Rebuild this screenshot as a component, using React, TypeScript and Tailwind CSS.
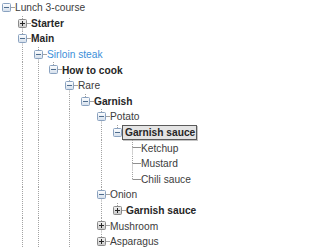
type Node = {
  label: string;
  children?: Node[];
  open?: boolean;
  bold?: boolean;
  link?: boolean;
  selected?: boolean;
};

const tree: Node = {
  label: "Lunch 3-course",
  open: true,
  children: [
    { label: "Starter", bold: true, children: [{ label: "Soup" }] },
    {
      label: "Main",
      bold: true,
      open: true,
      children: [
        {
          label: "Sirloin steak",
          link: true,
          open: true,
          children: [
            {
              label: "How to cook",
              bold: true,
              open: true,
              children: [
                {
                  label: "Rare",
                  open: true,
                  children: [
                    {
                      label: "Garnish",
                      bold: true,
                      open: true,
                      children: [
                        {
                          label: "Potato",
                          open: true,
                          children: [
                            {
                              label: "Garnish sauce",
                              bold: true,
                              selected: true,
                              open: true,
                              children: [
                                { label: "Ketchup" },
                                { label: "Mustard" },
                                { label: "Chili sauce" },
                              ],
                            },
                          ],
                        },
                        {
                          label: "Onion",
                          open: true,
                          children: [
                            { label: "Garnish sauce", bold: true, children: [{ label: "Ketchup" }] },
                          ],
                        },
                        { label: "Mushroom", children: [{ label: "Sauce" }] },
                        { label: "Asparagus", children: [{ label: "Sauce" }] },
                      ],
                    },
                  ],
                },
                { label: "Medium", children: [{ label: "Garnish" }] },
              ],
            },
          ],
        },
        { label: "Chicken", children: [{ label: "Grilled" }] },
      ],
    },
    { label: "Dessert", bold: true, children: [{ label: "Ice cream" }] },
  ],
};

type Row = { node: Node; level: number; guides: boolean[]; hasNext: boolean };

// only the rows that fit in the panel
const VISIBLE = 16;
const INDENT = 15.8;
const ROW_H = 15.6;

function flatten(node: Node, level: number, guides: boolean[], hasNext: boolean, out: Row[]) {
  out.push({ node, level, guides, hasNext });
  if (node.open && node.children) {
    node.children.forEach((child, i) => {
      const next = i < node.children!.length - 1;
      flatten(child, level + 1, level === 0 ? [] : [...guides, hasNext], next, out);
    });
  }
  return out;
}

// guide lines, connector and +/- box drawn as one small picture per row
function Gutter({ row, id }: { row: Row; id: number }) {
  const { node, level, guides, hasNext } = row;
  const colX = (k: number) => Math.round(INDENT * k);
  const lineX = (k: number) => colX(k) + 4.5;
  const own = level; // column of this node's box
  const width = colX(own) + 13;
  const mid = 7.5;
  const open = node.open;
  const stroke = "#a3a3a3";
  return (
    <svg width={width} height={ROW_H} className="block shrink-0" aria-hidden="true">
      <defs>
        <linearGradient id={`g${id}`} x1="0" y1="0" x2="0" y2="1">
          <stop offset="0" stopColor={open ? "#ffffff" : "#f2f2f2"} />
          <stop offset="1" stopColor={open ? "#d3deeb" : "#c9c9c9"} />
        </linearGradient>
      </defs>
      {guides.map((g, i) =>
        g ? (
          <line
            key={i}
            x1={lineX(i + 1)}
            x2={lineX(i + 1)}
            y1={0}
            y2={ROW_H}
            stroke={stroke}
            strokeDasharray="1 1"
          />
        ) : null,
      )}
      {level > 0 && (
        <line x1={lineX(own)} x2={lineX(own)} y1={0} y2={mid} stroke={stroke} strokeDasharray="1 1" />
      )}
      {hasNext && (
        <line x1={lineX(own)} x2={lineX(own)} y1={mid} y2={ROW_H} stroke={stroke} strokeDasharray="1 1" />
      )}
      {node.children ? (
        <>
          <line x1={colX(own) + 9} x2={colX(own) + 13} y1={mid} y2={mid} stroke={stroke} />
          <rect
            x={colX(own) + 0.5}
            y={3.5}
            width={8}
            height={8}
            rx={1}
            fill={`url(#g${id})`}
            stroke={open ? "#8aa2c0" : "#8a8a8a"}
          />
          <line
            x1={colX(own) + 2}
            x2={colX(own) + 7}
            y1={mid}
            y2={mid}
            stroke={open ? "#4f6d8e" : "#262626"}
          />
          {!open && (
            <line x1={lineX(own)} x2={lineX(own)} y1={5} y2={10} stroke="#262626" />
          )}
        </>
      ) : (
        <line x1={lineX(own)} x2={colX(own) + 13} y1={mid} y2={mid} stroke="#8f8f8f" />
      )}
    </svg>
  );
}

function TreeRow({ row, id }: { row: Row; id: number }) {
  const { node } = row;
  return (
    <div className="flex h-[15.6px] items-center whitespace-nowrap">
      <Gutter row={row} id={id} />
      <span
        className={
          "leading-[13px] " +
          (node.selected
            ? "ml-[-4px] border border-[#5a5a5a] bg-[#e4e4e4] pl-[2px] pr-[1px] shadow-[1px_1px_0_#c4c4c4] "
            : "") +
          (node.bold ? "font-bold text-[#262626] " : "") +
          (node.link ? "text-[#3b8fd9] " : !node.bold ? "text-[#3c3c3c] " : "")
        }
      >
        {node.label}
      </span>
    </div>
  );
}

export default function App() {
  const rows = flatten(tree, 0, [], false, []).slice(0, VISIBLE);
  return (
    <div className="h-[248px] w-[226px] overflow-hidden bg-white pl-[2px] font-['Liberation_Sans',Arial,sans-serif] text-[10.2px]">
      {rows.map((row, i) => (
        <TreeRow key={i} row={row} id={i} />
      ))}
    </div>
  );
}
